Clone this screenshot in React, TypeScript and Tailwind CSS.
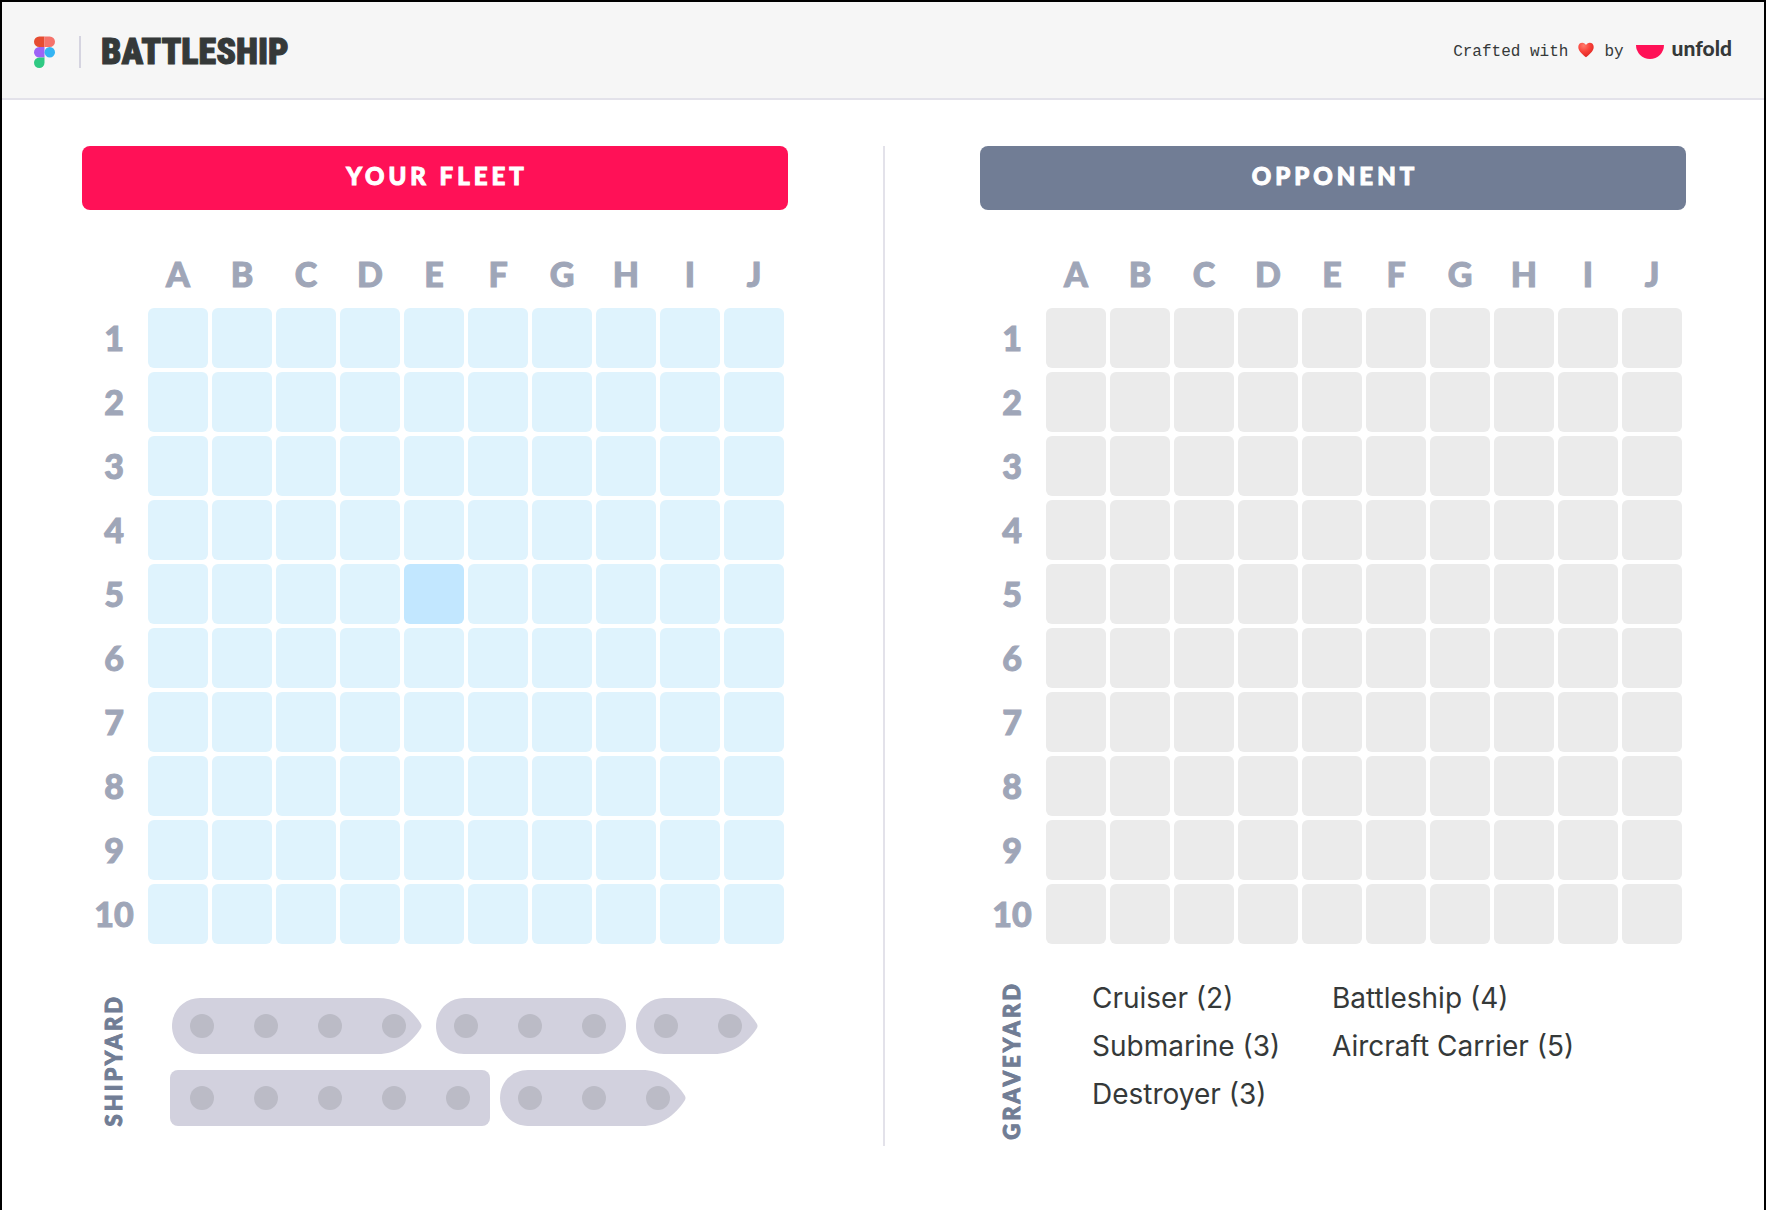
import React from 'react';

const COLUMNS = ['A', 'B', 'C', 'D', 'E', 'F', 'G', 'H', 'I', 'J'];
const ROWS = [1, 2, 3, 4, 5, 6, 7, 8, 9, 10];

type Hull = 'pointed' | 'round' | 'square';

const SHIPS: { name: string; size: number; hull: Hull }[] = [
  { name: 'Battleship', size: 4, hull: 'pointed' },
  { name: 'Submarine', size: 3, hull: 'round' },
  { name: 'Cruiser', size: 2, hull: 'pointed' },
  { name: 'Aircraft Carrier', size: 5, hull: 'square' },
  { name: 'Destroyer', size: 3, hull: 'pointed' },
];

const GRAVEYARD = [
  'Cruiser (2)',
  'Submarine (3)',
  'Destroyer (3)',
  'Battleship (4)',
  'Aircraft Carrier (5)',
];

function FigmaLogo() {
  return (
    <svg width="21" height="32" viewBox="0 0 21 32" aria-label="Figma">
      <path d="M5.25 0.5H10.5V11H5.25a5.25 5.25 0 0 1 0-10.5Z" fill="#e64c31" />
      <path d="M10.5 0.5h5.25a5.25 5.25 0 0 1 0 10.5H10.5Z" fill="#f5736b" />
      <path d="M5.25 11H10.5v10.5H5.25a5.25 5.25 0 0 1 0-10.5Z" fill="#9d63f6" />
      <circle cx="15.75" cy="16.25" r="5.25" fill="#34b4f3" />
      <path d="M5.25 21.5h5.25v5.25a5.25 5.25 0 1 1-5.25-5.25Z" fill="#2fc983" />
    </svg>
  );
}

function Heart() {
  return (
    <svg width="16" height="16" viewBox="0 0 16 16" role="img" aria-label="love" className="mb-1">
      <defs>
        <radialGradient id="heart" cx="0.35" cy="0.2" r="0.9">
          <stop offset="0" stopColor="#ff7a6b" />
          <stop offset="0.45" stopColor="#f9423a" />
          <stop offset="1" stopColor="#d81f1c" />
        </radialGradient>
      </defs>
      <path
        d="M8 15.3C5.6 13 .3 9.4 .3 4.9 .3 2.3 2.1 .7 4.3 .7 6 .7 7.4 1.7 8 3.1 8.6 1.7 10 .7 11.7 .7c2.2 0 4 1.6 4 4.2C15.7 9.4 10.4 13 8 15.3Z"
        fill="url(#heart)"
      />
    </svg>
  );
}

function Header() {
  return (
    <header className="flex h-[98px] items-center justify-between border-b-2 border-[#e3e2ea] bg-[#f6f6f6] px-8 pt-1 text-[#353939]">
      <div className="flex items-center">
        <FigmaLogo />
        <span className="mr-5 ml-6 h-8 w-[2px] bg-[#d5d4e0]" />
        <h1 className="font-['Roboto_Condensed','Roboto','Liberation_Sans',sans-serif] text-[36px] leading-8 font-black [-webkit-text-stroke:1px_#353939]">
          BATTLESHIP
        </h1>
      </div>
      <div className="flex items-center">
        <p className="mr-3 flex items-center gap-[10px] font-['Liberation_Mono',monospace] text-base">
          <span>Crafted with</span>
          <Heart />
          <span>by</span>
        </p>
        <a
          href="#unfold"
          className="flex items-center gap-2 font-['Lato',sans-serif] text-[21px] leading-6 font-black"
        >
          <svg width="28" height="14" viewBox="0 0 28 14" aria-hidden="true">
            <path d="M0 0H28A14 14 0 0 1 0 0Z" fill="#ff1157" />
          </svg>
          <span className="pb-2">unfold</span>
        </a>
      </div>
    </header>
  );
}

function Board({
  label,
  cellClass,
  active,
}: {
  label: string;
  cellClass: string;
  active?: string;
}) {
  return (
    <div className="mt-[30px] -ml-[2px]">
      <table
        aria-label={label}
        className="w-full table-fixed border-separate border-spacing-1 font-['Lato',sans-serif] text-[34px] leading-[60px] font-black text-[#9fa6b8] [-webkit-text-stroke:1px_#9fa6b8]"
      >
        <thead>
          <tr>
            <td className="p-0" />
            {COLUMNS.map((c) => (
              <th key={c} scope="col" className="p-0 text-center font-black">
                {c}
              </th>
            ))}
          </tr>
        </thead>
        <tbody>
          {ROWS.map((r) => (
            <tr key={r}>
              <th scope="row" className="p-0 text-center font-black">
                {r}
              </th>
              {COLUMNS.map((c) => (
                <td key={c} className="p-0">
                  <button
                    type="button"
                    aria-label={`${c}${r}`}
                    className={`block aspect-square w-full rounded-md ${
                      active === `${c}${r}` ? 'bg-[#c2e7ff]' : cellClass
                    }`}
                  />
                </td>
              ))}
            </tr>
          ))}
        </tbody>
      </table>
    </div>
  );
}

function hullPath(size: number, hull: Hull) {
  const w = size * 64;
  const stern = 'H30C14 56 2 43.5 2 28S14 0 30 0Z';
  if (hull === 'square') {
    return `M8 0H${w - 8}a8 8 0 0 1 8 8V48a8 8 0 0 1 -8 8H8a8 8 0 0 1 -8 -8V8a8 8 0 0 1 8 -8Z`;
  }
  if (hull === 'round') {
    return `M30 0H${w - 28}C${w - 12} 0 ${w} 12.5 ${w} 28S${w - 12} 56 ${w - 28} 56${stern}`;
  }
  return `M30 0H${w - 48}C${w - 30} 0 ${w - 15} 10 ${w - 5} 26Q${w - 4} 28 ${w - 5} 30C${w - 15} 46 ${w - 30} 56 ${w - 48} 56${stern}`;
}

function Ship({ name, size, hull }: { name: string; size: number; hull: Hull }) {
  const w = size * 64;
  return (
    <button type="button" aria-label={`${name} (${size})`} className="flex h-16 items-center">
      <svg width={w} height="56" viewBox={`0 0 ${w} 56`} aria-hidden="true">
        <path d={hullPath(size, hull)} fill="#d2d1de" />
        {Array.from({ length: size }, (_, i) => (
          <circle key={i} cx={32 + i * 64} cy="28" r="12" fill="#bbbbc6" />
        ))}
      </svg>
    </button>
  );
}

function SideLabel({ children }: { children: React.ReactNode }) {
  return (
    <h3 className="ml-[2px] flex h-[172px] w-[60px] shrink-0 items-center justify-center font-['Lato',sans-serif] text-[22px] leading-6 font-black tracking-[3px] text-[#717d95] [-webkit-text-stroke:1px_#717d95]">
      <span className="rotate-180 [writing-mode:vertical-rl]">{children}</span>
    </h3>
  );
}

const BANNER =
  "rounded-lg pb-1 pl-1 text-center font-['Lato',sans-serif] text-2xl leading-[60px] font-black tracking-[4px] text-white [-webkit-text-stroke:1px_#ffffff]";

export default function App() {
  return (
    <div className="min-h-screen border-x-2 border-t-2 border-black bg-white">
      <Header />
      <main className="grid grid-cols-[1fr_2px_1fr] gap-x-[95px] pt-[46px] pr-[78px] pb-16 pl-20">
        <section>
          <h2 className={`${BANNER} bg-[#ff1157]`}>YOUR FLEET</h2>
          <Board label="Your fleet" cellClass="bg-[#dff3fd]" active="E5" />
          <div className="mt-[26px] flex">
            <SideLabel>SHIPYARD</SideLabel>
            <div className="ml-[26px] flex flex-wrap content-start gap-2 pt-5">
              {SHIPS.map((s) => (
                <Ship key={s.name} {...s} />
              ))}
            </div>
          </div>
        </section>
        <div className="bg-[#e3e2ea]" />
        <section>
          <h2 className={`${BANNER} bg-[#717d95]`}>OPPONENT</h2>
          <Board label="Opponent" cellClass="bg-[#ebebeb]" />
          <div className="mt-[26px] flex">
            <SideLabel>GRAVEYARD</SideLabel>
            <ul className="ml-[50px] grid grid-flow-col grid-cols-[240px_auto] grid-rows-[repeat(3,48px)] font-['Inter',sans-serif] text-[28px] leading-[48px] text-[#353939] [font-optical-sizing:none]">
              {GRAVEYARD.map((g) => (
                <li key={g}>{g}</li>
              ))}
            </ul>
          </div>
        </section>
      </main>
    </div>
  );
}
